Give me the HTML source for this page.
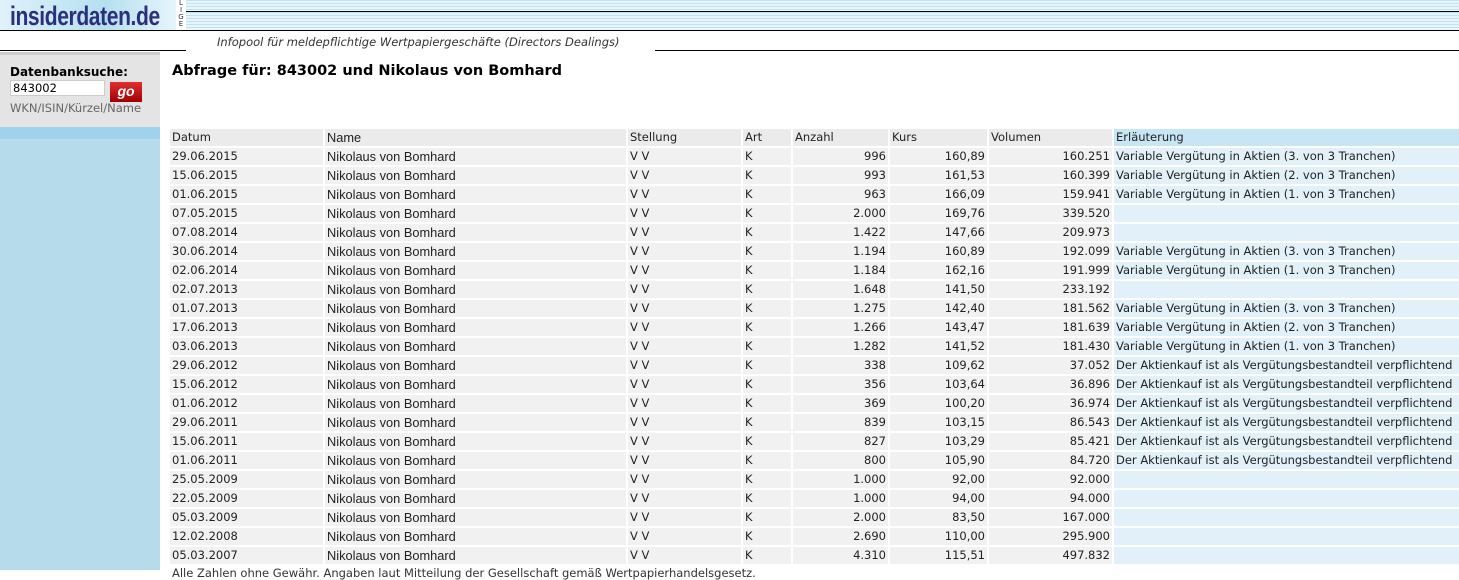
<!DOCTYPE html>
<html><head><meta charset="utf-8"><style>
*{margin:0;padding:0;box-sizing:border-box}
body{width:1459px;height:570px;overflow:hidden;background:#fff;font-family:"DejaVu Sans",Verdana,sans-serif;font-size:11.5px;color:#222;position:relative}
.top{position:absolute;left:0;top:0;width:1459px;height:30px;background:repeating-linear-gradient(#bfe3f3 0 1px,#e8f5fb 1px 3px)}
.logo{position:absolute;left:0;top:0;width:176px;height:30px;background:linear-gradient(90deg,#dff2fb,#b6dff0 60%,#e6f5fb);overflow:hidden}
.logo span{position:absolute;left:10px;top:1px;font:bold 27px "Liberation Sans",sans-serif;color:#2a2f7e;letter-spacing:-0.5px;transform:scaleX(0.78);transform-origin:left;white-space:nowrap}
.lige{position:absolute;left:176px;top:0;width:10px;height:30px;background:#fff;font:7px "DejaVu Sans",sans-serif;line-height:7px;text-align:center;color:#333}
.l1{position:absolute;left:186px;top:11px;width:1273px;height:1px;background:#000}
.l2{position:absolute;left:0;top:30px;width:1459px;height:1px;background:#000}
.l3{position:absolute;left:0;top:50px;width:186px;height:1px;background:#000}
.l4{position:absolute;left:655px;top:50px;width:804px;height:1px;background:#000}
.info{position:absolute;left:217px;top:35px;font-style:italic;color:#333;font-size:11.5px}
.side{position:absolute;left:0;top:52px;width:160px;height:75px;background:#e4e4e4;border-top:3px solid #ccc}
.sideb{position:absolute;left:0;top:127px;width:160px;height:443px;background:#b6dcec;border-top:12px solid #9fd3eb}
.side b{position:absolute;left:10px;top:10px;font-size:12px;color:#000}
.side input{position:absolute;left:10px;top:25px;width:95px;height:16px;border:1px solid #ccc;font:11.5px "DejaVu Sans",sans-serif;padding-left:2px}
.go{position:absolute;left:110px;top:27px;width:32px;height:20px;background:linear-gradient(#e03030,#a00000);color:#fff;font:italic bold 14px "Liberation Sans",sans-serif;text-align:center;line-height:18px}
.side .h{position:absolute;left:10px;top:46px;color:#666;font-size:11.5px}
h1{position:absolute;left:172px;top:63px;font-size:14.5px;color:#000}
table{position:absolute;left:168px;top:127px;border-collapse:separate;border-spacing:2px;width:1293px;table-layout:fixed}
td{height:17px;padding:0 2px;background:#f1f1f1;white-space:nowrap;line-height:17px;overflow:hidden}
tr:first-child td{background:#ebebeb}
td.e{background:#e2f1f9}
tr:first-child td.e{background:#c6e6f3}
td.r{text-align:right}
td.n{font-family:"Liberation Sans",sans-serif;font-size:12.8px}
</style></head><body>
<div class="top"></div>
<div class="logo"><span>insiderdaten.de</span></div>
<div class="lige">L<br>I<br>G<br>E</div>
<div class="l1"></div><div class="l2"></div><div class="l3"></div><div class="l4"></div>
<div class="info">Infopool für meldepflichtige Wertpapiergeschäfte (Directors Dealings)</div>
<div class="side"><b>Datenbanksuche:</b><input value="843002"><div class="go">go</div><div class="h">WKN/ISIN/Kürzel/Name</div></div>
<div class="sideb"></div>
<h1>Abfrage für: 843002 und Nikolaus von Bomhard</h1>
<table>
<colgroup><col style="width:153px"><col style="width:301px"><col style="width:113px"><col style="width:48px"><col style="width:95px"><col style="width:97px"><col style="width:123px"><col style="width:345px"></colgroup>
<tr><td>Datum</td><td class="n">Name</td><td>Stellung</td><td>Art</td><td>Anzahl</td><td>Kurs</td><td>Volumen</td><td class="e">Erläuterung</td></tr>
<tr><td>29.06.2015</td><td class="n">Nikolaus von Bomhard</td><td>V V</td><td>K</td><td class="r">996</td><td class="r">160,89</td><td class="r">160.251</td><td class="e">Variable Vergütung in Aktien (3. von 3 Tranchen)</td></tr>
<tr><td>15.06.2015</td><td class="n">Nikolaus von Bomhard</td><td>V V</td><td>K</td><td class="r">993</td><td class="r">161,53</td><td class="r">160.399</td><td class="e">Variable Vergütung in Aktien (2. von 3 Tranchen)</td></tr>
<tr><td>01.06.2015</td><td class="n">Nikolaus von Bomhard</td><td>V V</td><td>K</td><td class="r">963</td><td class="r">166,09</td><td class="r">159.941</td><td class="e">Variable Vergütung in Aktien (1. von 3 Tranchen)</td></tr>
<tr><td>07.05.2015</td><td class="n">Nikolaus von Bomhard</td><td>V V</td><td>K</td><td class="r">2.000</td><td class="r">169,76</td><td class="r">339.520</td><td class="e"></td></tr>
<tr><td>07.08.2014</td><td class="n">Nikolaus von Bomhard</td><td>V V</td><td>K</td><td class="r">1.422</td><td class="r">147,66</td><td class="r">209.973</td><td class="e"></td></tr>
<tr><td>30.06.2014</td><td class="n">Nikolaus von Bomhard</td><td>V V</td><td>K</td><td class="r">1.194</td><td class="r">160,89</td><td class="r">192.099</td><td class="e">Variable Vergütung in Aktien (3. von 3 Tranchen)</td></tr>
<tr><td>02.06.2014</td><td class="n">Nikolaus von Bomhard</td><td>V V</td><td>K</td><td class="r">1.184</td><td class="r">162,16</td><td class="r">191.999</td><td class="e">Variable Vergütung in Aktien (1. von 3 Tranchen)</td></tr>
<tr><td>02.07.2013</td><td class="n">Nikolaus von Bomhard</td><td>V V</td><td>K</td><td class="r">1.648</td><td class="r">141,50</td><td class="r">233.192</td><td class="e"></td></tr>
<tr><td>01.07.2013</td><td class="n">Nikolaus von Bomhard</td><td>V V</td><td>K</td><td class="r">1.275</td><td class="r">142,40</td><td class="r">181.562</td><td class="e">Variable Vergütung in Aktien (3. von 3 Tranchen)</td></tr>
<tr><td>17.06.2013</td><td class="n">Nikolaus von Bomhard</td><td>V V</td><td>K</td><td class="r">1.266</td><td class="r">143,47</td><td class="r">181.639</td><td class="e">Variable Vergütung in Aktien (2. von 3 Tranchen)</td></tr>
<tr><td>03.06.2013</td><td class="n">Nikolaus von Bomhard</td><td>V V</td><td>K</td><td class="r">1.282</td><td class="r">141,52</td><td class="r">181.430</td><td class="e">Variable Vergütung in Aktien (1. von 3 Tranchen)</td></tr>
<tr><td>29.06.2012</td><td class="n">Nikolaus von Bomhard</td><td>V V</td><td>K</td><td class="r">338</td><td class="r">109,62</td><td class="r">37.052</td><td class="e">Der Aktienkauf ist als Vergütungsbestandteil verpflichtend</td></tr>
<tr><td>15.06.2012</td><td class="n">Nikolaus von Bomhard</td><td>V V</td><td>K</td><td class="r">356</td><td class="r">103,64</td><td class="r">36.896</td><td class="e">Der Aktienkauf ist als Vergütungsbestandteil verpflichtend</td></tr>
<tr><td>01.06.2012</td><td class="n">Nikolaus von Bomhard</td><td>V V</td><td>K</td><td class="r">369</td><td class="r">100,20</td><td class="r">36.974</td><td class="e">Der Aktienkauf ist als Vergütungsbestandteil verpflichtend</td></tr>
<tr><td>29.06.2011</td><td class="n">Nikolaus von Bomhard</td><td>V V</td><td>K</td><td class="r">839</td><td class="r">103,15</td><td class="r">86.543</td><td class="e">Der Aktienkauf ist als Vergütungsbestandteil verpflichtend</td></tr>
<tr><td>15.06.2011</td><td class="n">Nikolaus von Bomhard</td><td>V V</td><td>K</td><td class="r">827</td><td class="r">103,29</td><td class="r">85.421</td><td class="e">Der Aktienkauf ist als Vergütungsbestandteil verpflichtend</td></tr>
<tr><td>01.06.2011</td><td class="n">Nikolaus von Bomhard</td><td>V V</td><td>K</td><td class="r">800</td><td class="r">105,90</td><td class="r">84.720</td><td class="e">Der Aktienkauf ist als Vergütungsbestandteil verpflichtend</td></tr>
<tr><td>25.05.2009</td><td class="n">Nikolaus von Bomhard</td><td>V V</td><td>K</td><td class="r">1.000</td><td class="r">92,00</td><td class="r">92.000</td><td class="e"></td></tr>
<tr><td>22.05.2009</td><td class="n">Nikolaus von Bomhard</td><td>V V</td><td>K</td><td class="r">1.000</td><td class="r">94,00</td><td class="r">94.000</td><td class="e"></td></tr>
<tr><td>05.03.2009</td><td class="n">Nikolaus von Bomhard</td><td>V V</td><td>K</td><td class="r">2.000</td><td class="r">83,50</td><td class="r">167.000</td><td class="e"></td></tr>
<tr><td>12.02.2008</td><td class="n">Nikolaus von Bomhard</td><td>V V</td><td>K</td><td class="r">2.690</td><td class="r">110,00</td><td class="r">295.900</td><td class="e"></td></tr>
<tr><td>05.03.2007</td><td class="n">Nikolaus von Bomhard</td><td>V V</td><td>K</td><td class="r">4.310</td><td class="r">115,51</td><td class="r">497.832</td><td class="e"></td></tr>
</table>
<div style="position:absolute;left:172px;top:566px;color:#333">Alle Zahlen ohne Gewähr. Angaben laut Mitteilung der Gesellschaft gemäß Wertpapierhandelsgesetz.</div>
</body></html>
